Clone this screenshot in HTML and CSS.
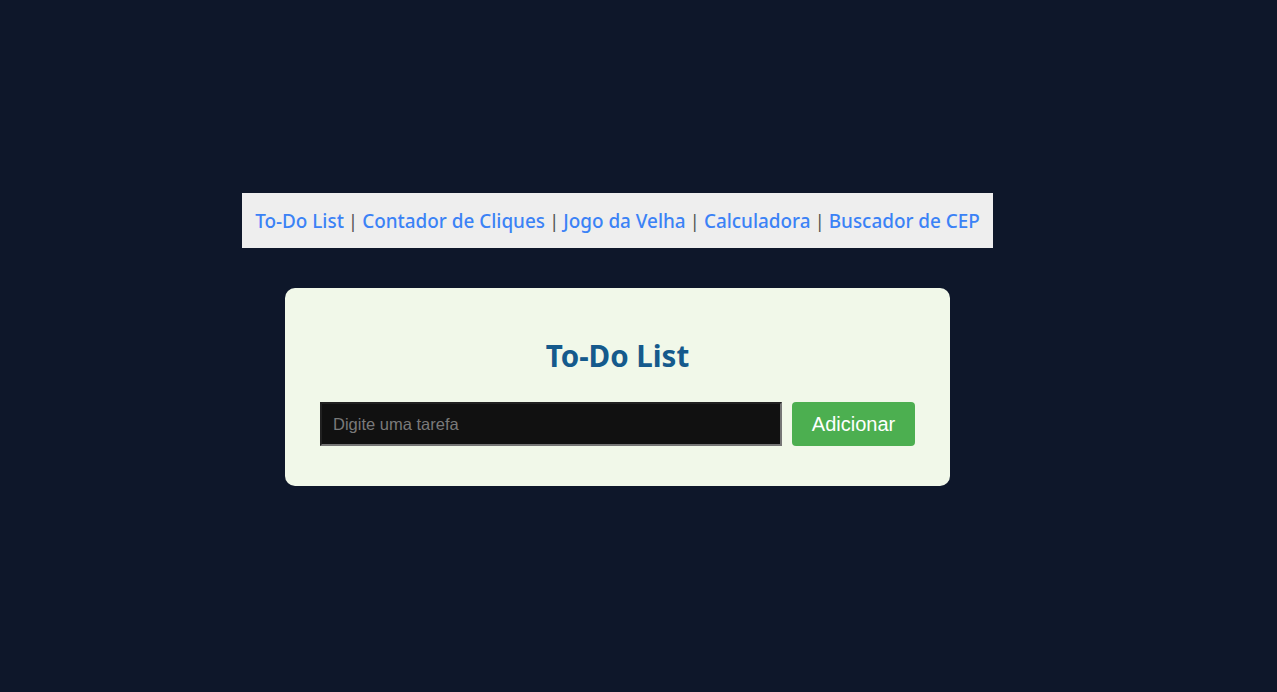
FILE: index.html
```html
<!DOCTYPE html>
<html lang="pt-BR">
<head>
<meta charset="utf-8">
<title>To-Do List</title>
<link rel="stylesheet" href="styles.css">
</head>
<body>
<div class="page">
  <nav class="nav">
    <a href="#">To-Do List</a> | <a href="#">Contador de Cliques</a> | <a href="#">Jogo da Velha</a> | <a href="#">Calculadora</a> | <a href="#">Buscador de CEP</a>
  </nav>
  <main class="card">
    <h1 class="title">To-Do List</h1>
    <div class="row">
      <input class="task-input" type="text" placeholder="Digite uma tarefa">
      <button class="add-btn">Adicionar</button>
    </div>
  </main>
</div>
</body>
</html>
```

FILE: styles.css
```css
html, body {
  margin: 0;
  padding: 0;
  background: #0e172a;
  height: 100%;
}
body {
  font-family: "Noto Sans", "Open Sans", sans-serif;
}
.page {
  display: flex;
  flex-direction: column;
  align-items: center;
  padding-top: 193px;
  padding-right: 42px;
  gap: 40px;
}
.nav {
  background: #eeeeee;
  color: #555555;
  font-size: 18.9px;
  line-height: 27px;
  padding: 15px 13px 13px;
  white-space: nowrap;
  word-spacing: -1px;
}
.nav a {
  color: #3b82f6;
  text-decoration: none;
  font-weight: 500;
  word-spacing: 0;
}
.card {
  background: #f1f8e9;
  border-radius: 10px;
  width: 665px;
  box-sizing: border-box;
  padding: 44px 35px 40px;
}
.title {
  margin: 0 0 22px;
  text-align: center;
  color: #155a8c;
  font-size: 29.5px;
  line-height: 48px;
  font-weight: 700;
}
.row {
  display: flex;
  gap: 10px;
}
.task-input {
  flex: 1;
  height: 44px;
  box-sizing: border-box;
  background: #111111;
  border: 2px inset #767676;
  color: #ddd;
  font-family: "Liberation Sans", Arial, sans-serif;
  font-size: 16.5px;
  padding: 0 11px;
  outline: none;
}
.task-input::placeholder {
  color: #7a7a7a;
}
.add-btn {
  width: 123px;
  height: 44px;
  background: #4caf50;
  color: #ffffff;
  border: none;
  border-radius: 4px;
  font-family: "Liberation Sans", Arial, sans-serif;
  font-size: 20px;
  cursor: pointer;
}
```
